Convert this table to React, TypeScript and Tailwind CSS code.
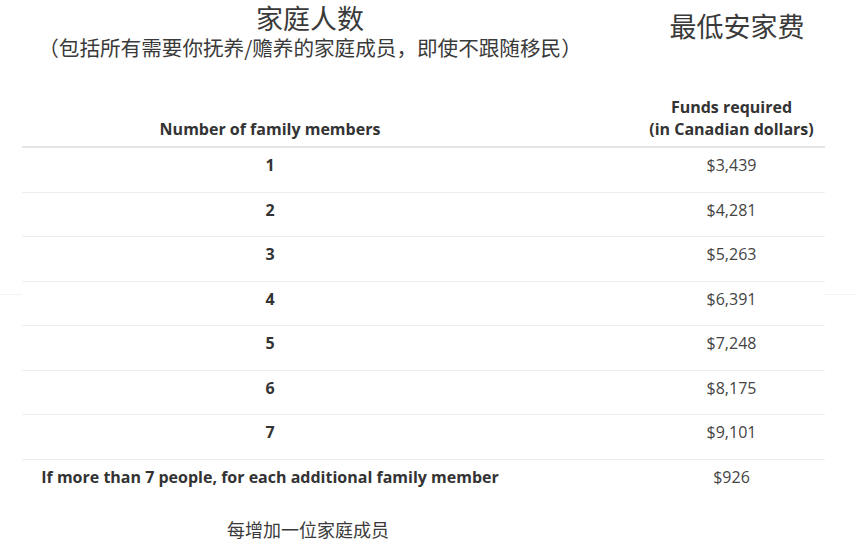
import React from "react";

const rows: [string, string][] = [
  ["1", "$3,439"],
  ["2", "$4,281"],
  ["3", "$5,263"],
  ["4", "$6,391"],
  ["5", "$7,248"],
  ["6", "$8,175"],
  ["7", "$9,101"],
];

const cjk = "font-['Noto_Sans_CJK_SC','Noto_Sans',sans-serif]";
const open = "font-['Open_Sans','Liberation_Sans',sans-serif]";

export default function App() {
  return (
    <div className="relative w-[856px] h-[547px] bg-white overflow-hidden">
      <div className="absolute left-0 right-0 top-[294px] h-px bg-[#f3f3f6]" />

      <div className="relative flex">
        <div className={`w-[620px] flex flex-col items-center text-[#3a3a3a] ${cjk}`}>
          <div className="text-[27px] leading-[34px] mt-[1px]">家庭人数</div>
          <div className="text-[20.6px] leading-[24px]">（包括所有需要你抚养/赡养的家庭成员，即使不跟随移民）</div>
        </div>
        <div className={`flex-1 pl-[1px] flex justify-start ${cjk}`}>
          <div className="w-[232px] text-center text-[27px] leading-[32px] mt-[10px] text-[#3a3a3a]">最低安家费</div>
        </div>
      </div>

      <div className={`relative bg-white ml-[22px] w-[803px] mt-[37px] ${open}`}>
        <div className="flex border-b-2 border-[#e6e6e6] font-bold text-[16px] leading-[22px] text-[#333]">
          <div className="w-[496px] flex items-end justify-center pb-[6px]">Number of family members</div>
          <div className="flex-1 pl-[120px] text-center pb-[6px]">
            <div>Funds required</div>
            <div>(in Canadian dollars)</div>
          </div>
        </div>
        {rows.map(([n, v]) => (
          <div
            key={n}
            className="flex h-[44.5px] pt-[6px] text-[16px] leading-[22px] border-b border-[#eeeeee]"
          >
            <div className="w-[496px] text-center font-bold text-[#333]">{n}</div>
            <div className="flex-1 pl-[120px] text-center text-[#444]">{v}</div>
          </div>
        ))}
        <div className="flex h-[44.5px] pt-[6px] text-[16px] leading-[22px]">
          <div className="w-[496px] text-center font-bold text-[#333]">If more than 7 people, for each additional family member</div>
          <div className="flex-1 pl-[120px] text-center text-[#444]">$926</div>
        </div>
      </div>

      <div className={`relative w-[616px] text-center text-[18px] leading-[24px] mt-[13px] text-[#3a3a3a] ${cjk}`}>每增加一位家庭成员</div>
    </div>
  );
}
